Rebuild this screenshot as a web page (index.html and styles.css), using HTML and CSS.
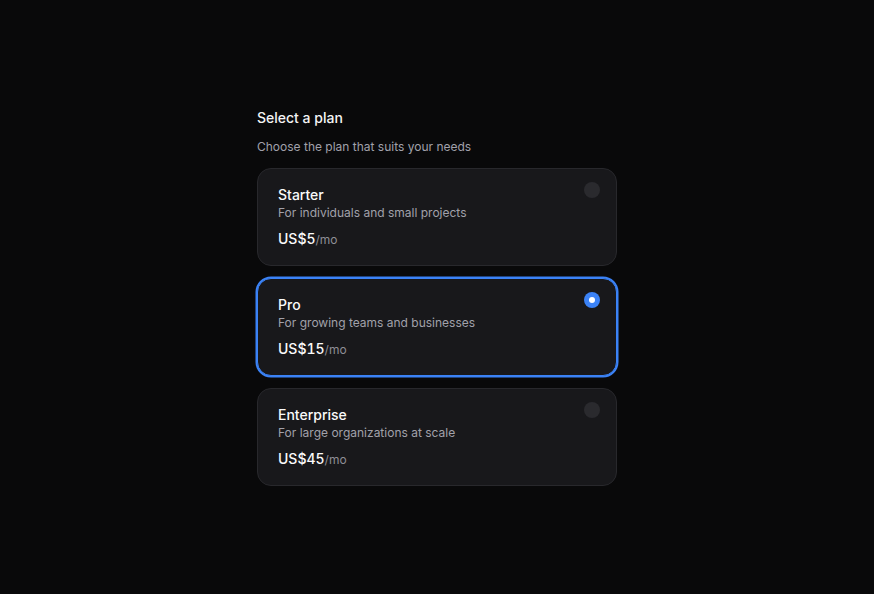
FILE: index.html
```html
<!DOCTYPE html>
<html lang="en">
<head>
<meta charset="utf-8">
<title>Select a plan</title>
<link rel="stylesheet" href="styles.css">
</head>
<body>
<main class="page">
  <section class="plans">
    <h1 class="plans-title">Select a plan</h1>
    <p class="plans-sub">Choose the plan that suits your needs</p>
    <div class="plan-list">
      <div class="plan">
        <div class="plan-info">
          <div class="plan-name">Starter</div>
          <div class="plan-desc">For individuals and small projects</div>
          <div class="plan-price">US$5<span class="per">/mo</span></div>
        </div>
        <span class="radio"></span>
      </div>
      <div class="plan selected">
        <div class="plan-info">
          <div class="plan-name">Pro</div>
          <div class="plan-desc">For growing teams and businesses</div>
          <div class="plan-price">US$15<span class="per">/mo</span></div>
        </div>
        <span class="radio checked"></span>
      </div>
      <div class="plan">
        <div class="plan-info">
          <div class="plan-name">Enterprise</div>
          <div class="plan-desc">For large organizations at scale</div>
          <div class="plan-price">US$45<span class="per">/mo</span></div>
        </div>
        <span class="radio"></span>
      </div>
    </div>
  </section>
</main>
</body>
</html>
```

FILE: styles.css
```css
* { box-sizing: border-box; }
html, body { margin: 0; padding: 0; }
body {
  background: #09090a;
  color: #fafafa;
  font-family: Inter, "Noto Sans", sans-serif;
}
.page {
  min-height: 100vh;
  display: flex;
  align-items: center;
  justify-content: center;
}
.plans {
  width: 360px;
  display: flex;
  flex-direction: column;
}
.plans-title {
  margin: 0;
  font-size: 14px;
  line-height: 20px;
  font-weight: 500;
  color: #f4f4f5;
}
.plans-sub {
  margin: 11px 0 13px;
  font-size: 12px;
  line-height: 16px;
  color: #a1a1aa;
}
.plan-list {
  display: flex;
  flex-direction: column;
  gap: 12px;
}
.plan {
  height: 98px;
  display: flex;
  justify-content: space-between;
  align-items: flex-start;
  padding: 16px 16px 16px 20px;
  background: #18181b;
  border: 1px solid #28282c;
  border-radius: 14px;
}
.plan.selected {
  border-color: #3b82f6;
  box-shadow: 0 0 0 1.5px #3b82f6;
}
.plan-info {
  display: flex;
  flex-direction: column;
}
.plan-name {
  font-size: 14px;
  line-height: 20px;
  font-weight: 500;
  color: #fafafa;
}
.plan-desc {
  font-size: 12px;
  line-height: 16px;
  color: #a1a1aa;
}
.plan-price {
  margin-top: 8px;
  font-size: 14px;
  line-height: 20px;
  font-weight: 500;
  color: #fafafa;
  font-variant-numeric: tabular-nums;
}
.per {
  font-size: 12px;
  font-weight: 400;
  color: #8e8e96;
}
.radio {
  width: 16px;
  height: 16px;
  margin-top: -3px;
  border-radius: 50%;
  background: #2a2a2e;
  flex: none;
  display: flex;
  align-items: center;
  justify-content: center;
}
.radio.checked {
  background: #3b82f6;
}
.radio.checked::after {
  content: "";
  width: 6px;
  height: 6px;
  border-radius: 50%;
  background: #ffffff;
}
```
